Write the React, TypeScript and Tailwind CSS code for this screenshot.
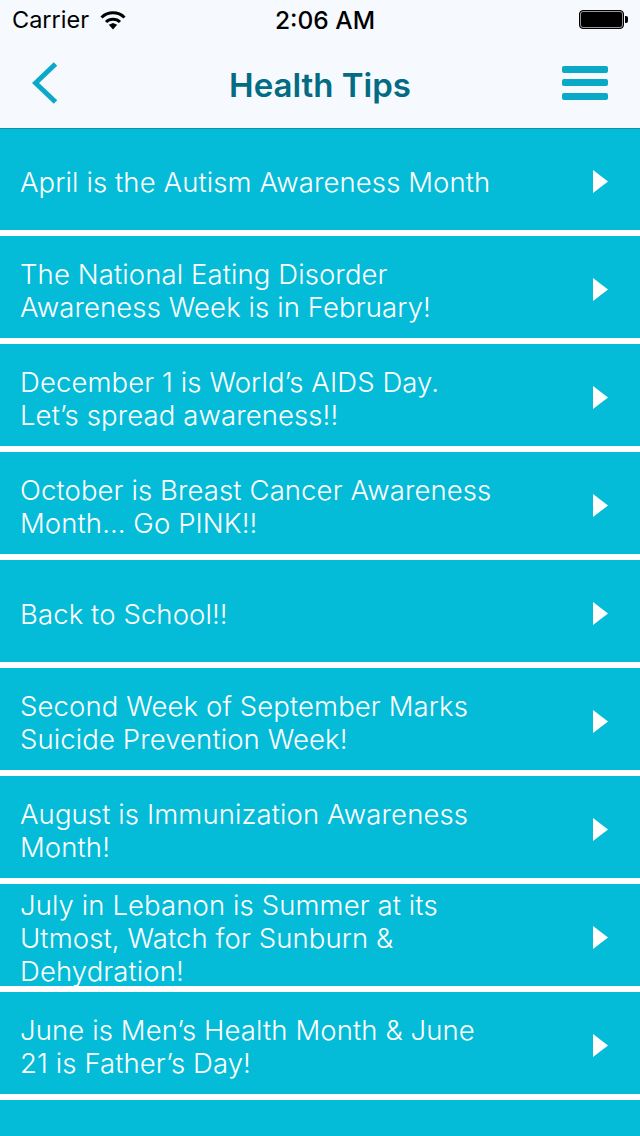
import React from 'react'

const tips = [
  ['The National Eating Disorder', 'Awareness Week is in February!'],
  ['December 1 is World’s AIDS Day.', 'Let’s spread awareness!!'],
  ['October is Breast Cancer Awareness', 'Month… Go PINK!!'],
  ['Back to School!!'],
  ['Second Week of September Marks', 'Suicide Prevention Week!'],
  ['August is Immunization Awareness', 'Month!'],
  ['July in Lebanon is Summer at its', 'Utmost, Watch for Sunburn &', 'Dehydration!'],
  ['June is Men’s Health Month & June', '21 is Father’s Day!'],
]

function TipRow({ lines, first }: { lines: string[]; first?: boolean }) {
  return (
    <div className={`${first ? 'h-[101px]' : 'h-[102px]'} shrink-0 bg-[#05bcd8] flex items-center justify-between overflow-hidden pt-[4px] pl-[20px] pr-[32px]`}>
      <div className={`${first ? 'mt-[2px]' : 'mt-[3px]'} text-white text-[27.5px] leading-[33px] font-light tracking-[0.1px] whitespace-nowrap`}>
        {lines.map((line) => (
          <div key={line}>{line}</div>
        ))}
      </div>
      <svg width="15" height="23" viewBox="0 0 15 23" className="shrink-0">
        <polygon points="0,0 15,11.5 0,23" fill="#ffffff" />
      </svg>
    </div>
  )
}

export default function App() {
  return (
    <div className="w-[640px] h-[1136px] overflow-hidden bg-white font-['Inter',sans-serif] flex flex-col">
      <div className="h-[129px] shrink-0 bg-[#f6f9fd] border-b border-[#0a93a8] flex flex-col">
        <div className="h-[40px] flex items-center justify-between pl-[12px] pr-[11px] relative text-black">
          <div className="flex items-center gap-[11px]">
            <span className="text-[23.5px] leading-none font-normal">Carrier</span>
            <svg width="26" height="19" viewBox="0 0 26 19">
              <path d="M1.5 6.5 A16.5 16.5 0 0 1 24.5 6.5" fill="none" stroke="#000" strokeWidth="3" />
              <path d="M6 11 A10 10 0 0 1 20 11" fill="none" stroke="#000" strokeWidth="3" />
              <polygon points="8.8,13.8 13,18.5 17.2,13.8 13,12" fill="#000" />
            </svg>
          </div>
          <span className="absolute left-[275px] text-[24.5px] leading-none font-medium">2:06 AM</span>
          <svg width="50" height="20" viewBox="0 0 50 20">
            <rect x="0.5" y="0.5" width="44" height="18" rx="3.5" fill="#000" stroke="#000" />
            <rect x="1.5" y="1.5" width="42" height="16" rx="2.5" fill="#000" stroke="#fff" strokeWidth="0.6" />
            <path d="M46 6 h1 a2 2 0 0 1 2 2 v3 a2 2 0 0 1 -2 2 h-1 z" fill="#000" />
          </svg>
        </div>
        <div className="flex-1 grid grid-cols-[1fr_auto_1fr] items-center pl-[32px] pr-[32px] pb-[3px]">
          <svg width="26" height="42" viewBox="0 0 26 42">
            <polyline points="23.5,2 3.5,21 23.5,40" fill="none" stroke="#0aa9c7" strokeWidth="5" />
          </svg>
          <span className="mt-[6px] text-[33px] leading-none font-semibold text-[#036b82]">Health Tips</span>
          <div className="flex flex-col gap-[6.5px] w-[46px] justify-self-end">
            <div className="h-[7px] rounded-[2px] bg-[#0aa9c7]" />
            <div className="h-[7px] rounded-[2px] bg-[#0aa9c7]" />
            <div className="h-[7px] rounded-[2px] bg-[#0aa9c7]" />
          </div>
        </div>
      </div>
      <div className="flex flex-col gap-[6px] flex-1 overflow-hidden">
        <TipRow first lines={['April is the Autism Awareness Month']} />
        {tips.map((lines) => (
          <TipRow key={lines[0]} lines={lines} />
        ))}
        <div className="flex-1 bg-[#05bcd8]" />
      </div>
    </div>
  )
}
